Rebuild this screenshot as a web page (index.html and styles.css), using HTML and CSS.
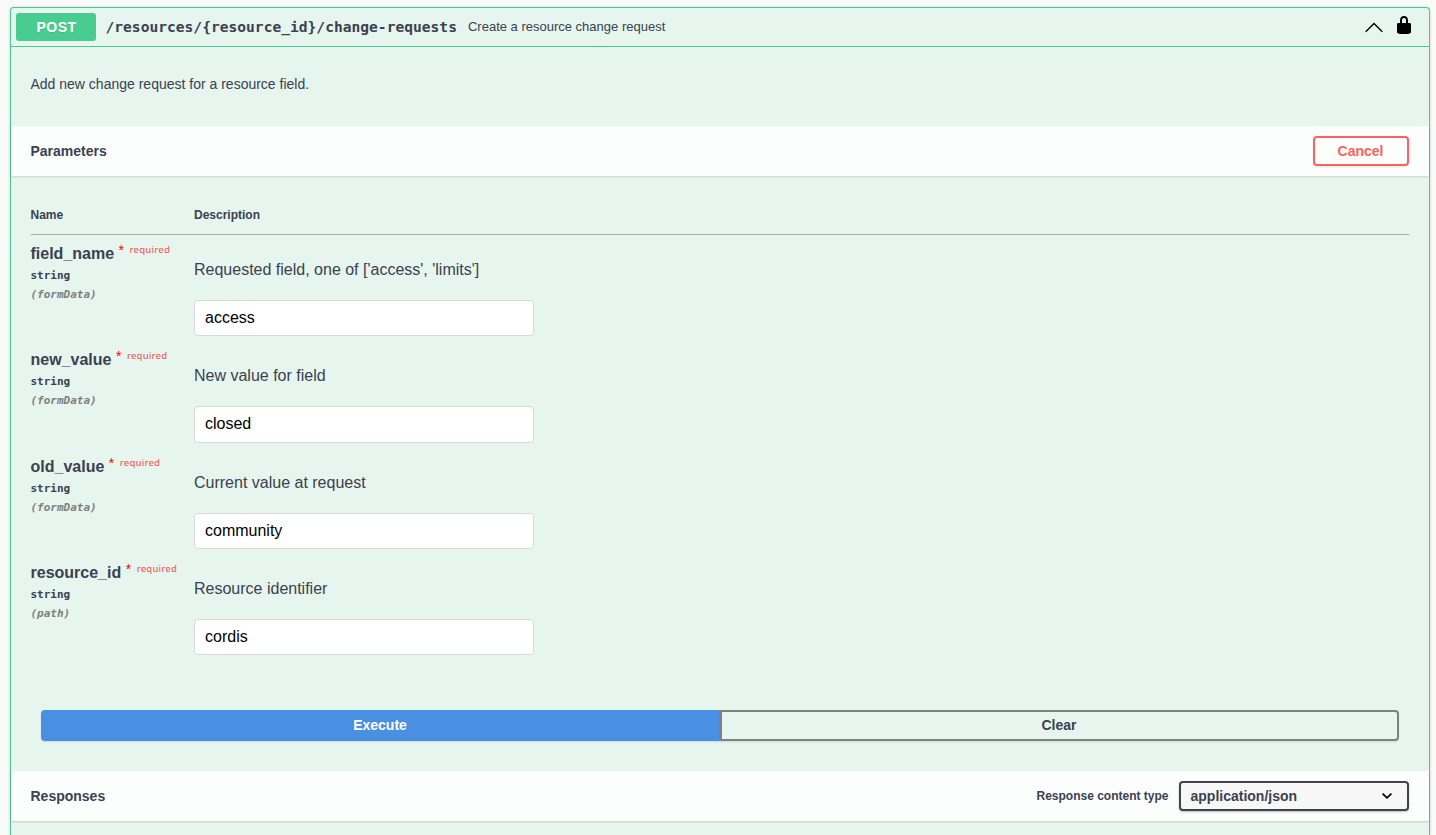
FILE: index.html
```html
<!DOCTYPE html>
<html lang="en">
<head>
<meta charset="utf-8">
<title>API documentation</title>
<link rel="stylesheet" href="styles.css">
</head>
<body>
<main class="opblock">
  <header class="summary">
    <span class="method">POST</span>
    <span class="path">/resources/{resource_id}/change-requests</span>
    <span class="summary-text">Create a resource change request</span>
    <svg class="arrow" width="20" height="20" viewBox="0 0 20 20"><path d="M1.7 14.8 L10 6.5 L18.3 14.8" fill="none" stroke="#000" stroke-width="1.4"/></svg>
    <svg class="lock" width="20" height="20" viewBox="0 0 20 20"><path d="M15.8 8H14V5.6C14 2.703 12.665 1 10 1 7.334 1 6 2.703 6 5.6V8H4c-.553 0-1 .646-1 1.199V17c0 .549.428 1.139.951 1.307l1.197.387C5.672 18.861 6.55 19 7.1 19h5.8c.549 0 1.428-.139 1.951-.307l1.196-.387c.524-.167.953-.757.953-1.306V9.199C17 8.646 16.352 8 15.8 8zM12 8H8V5.199C8 3.754 8.797 3 10 3c1.203 0 2 .754 2 2.199V8z"/></svg>
  </header>
  <p class="description">Add new change request for a resource field.</p>
  <section class="section-header">
    <h4>Parameters</h4>
    <button class="btn cancel">Cancel</button>
  </section>
  <section class="parameters">
    <div class="row head"><span>Name</span><span>Description</span></div>
    <div class="row">
      <div>
        <div class="name">field_name<span class="star">*</span><span class="required">required</span></div>
        <div class="type">string</div><div class="in">(formData)</div>
      </div>
      <div><p class="param-text">Requested field, one of ['access', 'limits']</p><input type="text" value="access"></div>
    </div>
    <div class="row">
      <div>
        <div class="name">new_value<span class="star">*</span><span class="required">required</span></div>
        <div class="type">string</div><div class="in">(formData)</div>
      </div>
      <div><p class="param-text">New value for field</p><input type="text" value="closed"></div>
    </div>
    <div class="row">
      <div>
        <div class="name">old_value<span class="star">*</span><span class="required">required</span></div>
        <div class="type">string</div><div class="in">(formData)</div>
      </div>
      <div><p class="param-text">Current value at request</p><input type="text" value="community"></div>
    </div>
    <div class="row">
      <div>
        <div class="name">resource_id<span class="star">*</span><span class="required">required</span></div>
        <div class="type">string</div><div class="in">(path)</div>
      </div>
      <div><p class="param-text">Resource identifier</p><input type="text" value="cordis"></div>
    </div>
  </section>
  <div class="actions">
    <button class="btn execute">Execute</button>
    <button class="btn clear">Clear</button>
  </div>
  <section class="section-header">
    <h4>Responses</h4>
    <span class="content-label">Response content type</span>
    <div class="select"><span>application/json</span>
      <svg width="12" height="8" viewBox="0 0 12 8"><path d="M1.6 1.6 L6 5.9 L10.4 1.6" fill="none" stroke="#000" stroke-width="1.7"/></svg>
    </div>
  </section>
</main>
</body>
</html>
```
FILE: styles.css
```css
* { box-sizing: border-box; }
body {
  margin: 0;
  height: 835px;
  padding: 7px 6px 0 10px;
  background: #fafafa;
  color: #3b4151;
  font-family: "Liberation Sans", Arial, sans-serif;
}
.opblock {
  height: 828px;
  border: 1px solid #49cc90;
  border-bottom: 0;
  border-radius: 4px 4px 0 0;
  background: #e6f5ed;
  box-shadow: 0 0 3px rgba(0, 0, 0, .19);
}
.summary {
  display: flex;
  align-items: center;
  height: 39px;
  padding: 0 15px 0 5px;
  border-bottom: 1px solid #49cc90;
}
.method {
  width: 80px;
  height: 28px;
  border-radius: 3px;
  background: #49cc90;
  color: #fff;
  font-size: 14px;
  font-weight: 700;
  line-height: 28px;
  letter-spacing: .5px;
  text-align: center;
  text-indent: 1px;
  text-shadow: 0 1px 0 rgba(0, 0, 0, .1);
}
.path {
  padding: 0 11px 1px 9.5px;
  font: 700 14.6px "DejaVu Sans Mono", monospace;
}
.summary-text {
  flex: 1;
  padding-bottom: 2px;
  font-size: 13px;
}
.arrow { margin-right: 10px; }
.lock { margin-bottom: 5px; }
.description {
  margin: 0;
  height: 79px;
  padding: 29px 19.5px 0;
  font-size: 14px;
  line-height: 17px;
}
.section-header {
  display: flex;
  align-items: center;
  height: 50px;
  padding: 0 20px 0 19.5px;
  background: rgba(255, 255, 255, .85);
  box-shadow: 0 1px 2px rgba(0, 0, 0, .15);
}
.section-header h4 {
  flex: 1;
  margin: 0;
  font-size: 14px;
}
.btn {
  padding: 0 1px 0 0;
  border: 2px solid #808080;
  border-radius: 4px;
  background: transparent;
  box-shadow: 0 1px 2px rgba(0, 0, 0, .1);
  color: #3b4151;
  font: 700 14px "Liberation Sans", Arial, sans-serif;
}
.cancel {
  width: 96px;
  height: 30px;
  border-color: #ff6060;
  color: #ff6060;
}
.parameters { padding: 20px 20px 0 19.5px; }
.row {
  display: grid;
  grid-template-columns: 163.5px 1fr;
  height: 106.33px;
}
.head {
  height: 39px;
  padding-top: 12px;
  border-bottom: 1px solid #a4b2b2;
  font-size: 12px;
  font-weight: 700;
  line-height: 15px;
}
.name {
  display: flex;
  padding-top: 9px;
  font-size: 16px;
  font-weight: 700;
  line-height: 19px;
}
.star, .required {
  color: rgba(255, 0, 0, .65);
  font-size: 9.6px;
  font-weight: 500;
  line-height: 12px;
}
.star {
  margin: 0 5.5px 0 4.5px;
  color: #f00;
  font-size: 14px;
}
.required {
  font-family: "Noto Sans", sans-serif;
  letter-spacing: .15px;
}
.type, .in {
  font: 700 11px/14px "DejaVu Sans Mono", monospace;
}
.type { padding-top: 6px; }
.in {
  padding-top: 5px;
  color: #808080;
  font-style: italic;
}
.param-text {
  margin: 0 0 -20px;
  padding: 25px 0 41px;
  font-size: 16px;
  line-height: 19px;
}
.row input {
  display: block;
  width: 340px;
  height: 36.33px;
  padding: 0 10px .5px;
  border: 1px solid #d9d9d9;
  border-radius: 4px;
  background: #fff;
  color: #000;
  font: 16px "Liberation Sans", Arial, sans-serif;
}
.actions {
  display: flex;
  padding: 50px 30px 30px;
}
.actions .btn {
  flex: 1;
  height: 31px;
  padding-bottom: 1px;
}
.actions .execute {
  border-color: #4990e2;
  border-radius: 4px 0 0 4px;
  background: #4990e2;
  color: #fff;
}
.actions .clear { border-radius: 0 4px 4px 0; }
.content-label {
  margin-right: 10.5px;
  font-size: 12px;
  font-weight: 700;
}
.select {
  display: flex;
  align-items: center;
  justify-content: space-between;
  width: 230px;
  height: 30px;
  padding: 0 14px 0 9.5px;
  border: 2px solid #41444e;
  border-radius: 4px;
  background: #f7f7f7;
  box-shadow: 0 1px 2px rgba(0, 0, 0, .25);
  font-size: 14px;
  font-weight: 700;
}
```
